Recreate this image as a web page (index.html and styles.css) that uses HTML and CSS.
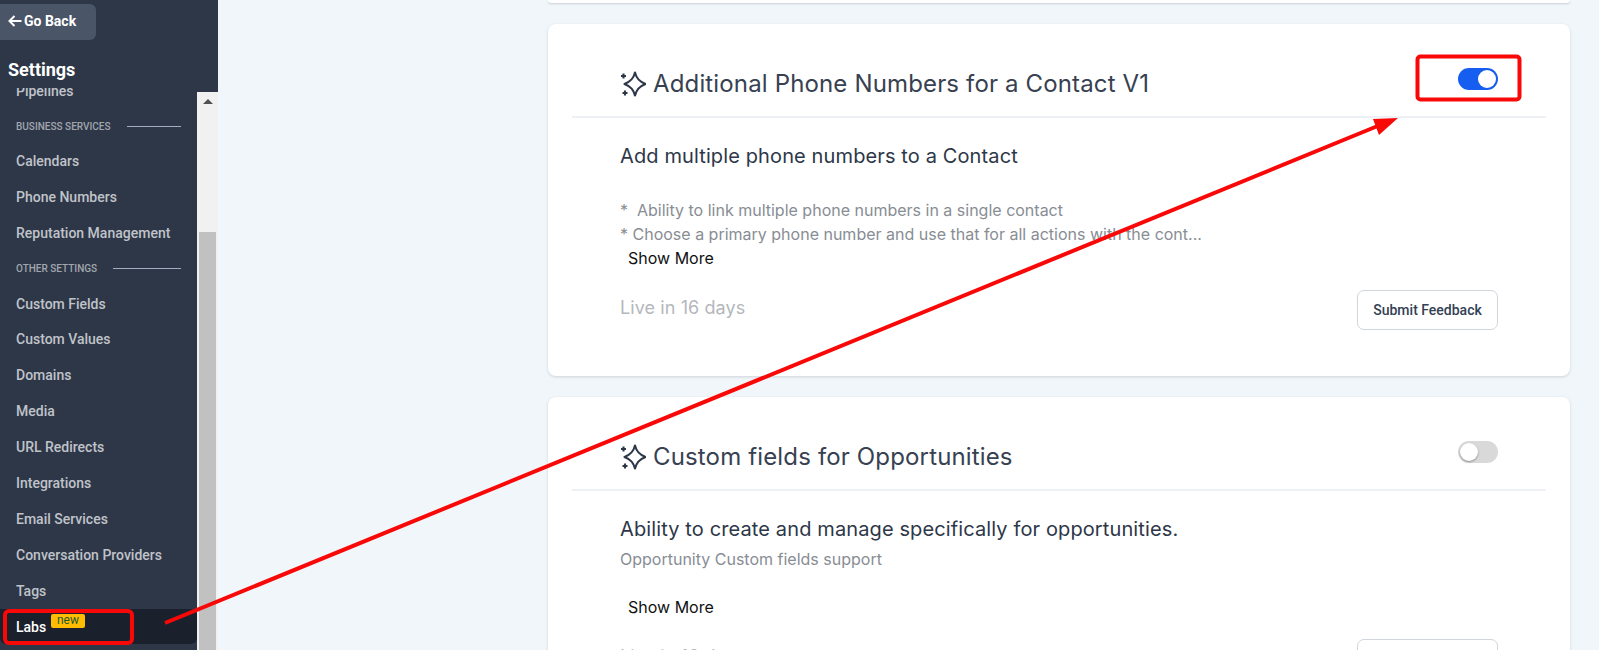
FILE: index.html
```html
<!DOCTYPE html>
<html lang="en">
<head>
<meta charset="utf-8">
<title>Labs</title>
<link rel="stylesheet" href="styles.css">
</head>
<body>
<div class="app">
  <aside class="sidebar">
    <div class="side-head">
      <a class="back"><span class="back-arrow">
        <svg width="14" height="12" viewBox="0 0 14 12"><path d="M13.5 6H2M6.5 1 1.5 6l5 5" fill="none" stroke="#fff" stroke-width="2"/></svg>
      </span>Go Back</a>
      <h1 class="side-title">Settings</h1>
    </div>
    <div class="side-body">
      <nav class="nav">
        <a class="nav-item">Pipelines</a>
        <div class="nav-section"><span>BUSINESS SERVICES</span><i></i></div>
        <a class="nav-item">Calendars</a>
        <a class="nav-item">Phone Numbers</a>
        <a class="nav-item">Reputation Management</a>
        <div class="nav-section"><span>OTHER SETTINGS</span><i></i></div>
        <a class="nav-item">Custom Fields</a>
        <a class="nav-item">Custom Values</a>
        <a class="nav-item">Domains</a>
        <a class="nav-item">Media</a>
        <a class="nav-item">URL Redirects</a>
        <a class="nav-item">Integrations</a>
        <a class="nav-item">Email Services</a>
        <a class="nav-item">Conversation Providers</a>
        <a class="nav-item">Tags</a>
        <a class="nav-item active">Labs<span class="badge">new</span></a>
      </nav>
      <div class="scrollbar">
        <div class="scroll-up"></div>
        <div class="scroll-thumb"></div>
      </div>
    </div>
  </aside>
  <main class="main">
    <div class="stub"></div>
    <section class="card">
      <header class="card-head">
        <h2 class="card-title">
          <svg class="spark" width="26" height="26" viewBox="0 0 26 26"><path d="M15 1.500C16.500 7.500 19 10.500 25.500 13 19 15.500 16.500 18.500 15 24.500 13.500 18.500 11 15.500 4.500 13 11 10.500 13.500 7.500 15 1.500Z" fill="none" stroke="#2d3748" stroke-width="2.100" stroke-linejoin="round"/><path d="M3.500 2.500v5M1 5h5M5 19.500v5M2.500 22h5" fill="none" stroke="#2d3748" stroke-width="2.100"/></svg>
          Additional Phone Numbers for a Contact V1
        </h2>
        <span class="toggle on"><b></b></span>
      </header>
      <div class="card-body">
        <h3 class="lead">Add multiple phone numbers to a Contact</h3>
        <div class="desc tall">
          <p>*&nbsp; Ability to link multiple phone numbers in a single contact</p>
          <p>* Choose a primary phone number and use that for all actions with the cont...</p>
        </div>
        <a class="more">Show More</a>
        <div class="foot">
          <span class="live">Live in 16 days</span>
          <button class="btn">Submit Feedback</button>
        </div>
      </div>
    </section>
    <section class="card">
      <header class="card-head">
        <h2 class="card-title">
          <svg class="spark" width="26" height="26" viewBox="0 0 26 26"><path d="M15 1.500C16.500 7.500 19 10.500 25.500 13 19 15.500 16.500 18.500 15 24.500 13.500 18.500 11 15.500 4.500 13 11 10.500 13.500 7.500 15 1.500Z" fill="none" stroke="#2d3748" stroke-width="2.100" stroke-linejoin="round"/><path d="M3.500 2.500v5M1 5h5M5 19.500v5M2.500 22h5" fill="none" stroke="#2d3748" stroke-width="2.100"/></svg>
          Custom fields for Opportunities
        </h2>
        <span class="toggle"><b></b></span>
      </header>
      <div class="card-body">
        <h3 class="lead">Ability to create and manage specifically for opportunities.</h3>
        <div class="desc">
          <p>Opportunity Custom fields support</p>
        </div>
        <a class="more spaced">Show More</a>
        <div class="foot">
          <span class="live">Live in 16 days</span>
          <button class="btn">Submit Feedback</button>
        </div>
      </div>
    </section>
  </main>
</div>
<svg class="annot" width="1599" height="650" viewBox="0 0 1599 650">
  <rect x="1417.500" y="56.500" width="102" height="43" rx="3" fill="none" stroke="#f90808" stroke-width="4"/>
  <rect x="5" y="611" width="127" height="32" rx="4" fill="none" stroke="#f90808" stroke-width="4"/>
  <path d="M165 623 1385 123" fill="none" stroke="#f90808" stroke-width="4"/>
  <path d="M1398 118 1373 119 1379 135Z" fill="#f90808"/>
</svg>
</body>
</html>
```
FILE: styles.css
```css
* { box-sizing: border-box; }
html, body { margin: 0; height: 650px; overflow: hidden; }
body { background: #f1f6fa; font-family: Inter, "Liberation Sans", sans-serif; position: relative; }
h1, h2, h3, p { margin: 0; font-weight: 400; }

.app { display: flex; height: 650px; }

.sidebar {
  width: 218px;
  flex: none;
  background: #2d3748;
  display: flex;
  flex-direction: column;
  font-family: Roboto, "Liberation Sans", sans-serif;
}
.side-head { height: 88px; flex: none; padding-top: 4px; }
.back {
  display: flex;
  align-items: center;
  width: 96px;
  height: 36px;
  padding-left: 8px;
  padding-bottom: 2px;
  background: #4a5568;
  border-radius: 0 6px 6px 0;
  color: #fff;
  font-size: 14px;
  font-weight: 700;
}
.back-arrow { display: flex; margin-right: 2px; }
.side-title { margin: 18px 0 0 8px; color: #fff; font-size: 18px; font-weight: 700; line-height: 24px; }

.side-body { flex: 1; min-height: 0; display: flex; overflow: hidden; }
.nav { width: 197px; flex: none; margin-top: -15px; }
.nav-item {
  display: flex;
  align-items: center;
  height: 35.9px;
  padding-left: 16px;
  color: #c0c3c9;
  font-size: 14px;
  font-weight: 500;
}
.nav-section {
  display: flex;
  align-items: center;
  height: 34.500px;
  padding: 1px 16px 0;
  color: #a2a6ae;
  font-size: 10px;
  font-weight: 500;
}
.nav-section i { flex: 1; height: 1px; margin-left: 16px; background: #a0aec0; }
.nav-item.active {
  position: relative;
  color: #fff;
  background: #1a202c;
  border-radius: 0 6px 6px 6px;
}
.badge {
  position: absolute;
  left: 51px;
  top: 5px;
  width: 34px;
  height: 14px;
  background: #ffbc00;
  border-radius: 2px;
  color: #1f5a2a;
  font-size: 12px;
  font-weight: 400;
  line-height: 12px;
  text-align: center;
}

.scrollbar { width: 21px; flex: none; margin-top: 4px; background: #f1f1f1; padding: 0 2px; }
.scroll-up {
  width: 0;
  height: 0;
  margin: 7px auto 0;
  border: 5px solid transparent;
  border-top: 0;
  border-bottom-color: #505050;
}
.scroll-thumb { height: 420px; margin-top: 128px; background: #c1c1c1; }

.main { flex: 1; min-width: 0; padding: 0 29px 0 330px; color: #2d3748; }
.stub {
  height: 3px;
  background: #fff;
  border-radius: 0 0 8px 8px;
  box-shadow: 0 1px 2px rgba(45, 55, 72, .2);
}
.card {
  margin-top: 21px;
  height: 352px;
  background: #fff;
  border-radius: 8px;
  box-shadow: 0 1px 3px rgba(45, 55, 72, .18);
}
.card-head {
  height: 93.500px;
  margin: 0 24px;
  padding: 44px 48px 0;
  display: flex;
  justify-content: space-between;
  border-bottom: 2px solid #edf0f4;
}
.card-title {
  display: flex;
  align-items: center;
  gap: 7px;
  height: 32px;
  color: #374151;
  font-size: 24px;
  letter-spacing: .15px;
  line-height: 32px;
}
.toggle {
  width: 40px;
  height: 22px;
  border-radius: 11px;
  background: #d9d9d9;
  padding: 2px;
}
.toggle b {
  display: block;
  width: 18px;
  height: 18px;
  border-radius: 50%;
  background: #fff;
  box-shadow: 0 1px 2px rgba(0, 0, 0, .35);
}
.toggle.on { background: #155eef; }
.toggle.on b { margin-left: 18px; box-shadow: none; }

.card-body { padding: 24.500px 72px 0; }
.lead { font-size: 20px; letter-spacing: .12px; line-height: 28px; color: #2d3748; }
.desc { margin-top: 4px; color: #888d94; font-size: 16px; line-height: 24px; }
.desc.tall { margin-top: 28px; }
.more { display: block; margin-left: 8px; color: #111; font-size: 16px; line-height: 24px; }
.more.spaced { margin-top: 24px; }
.foot { display: flex; justify-content: space-between; align-items: flex-start; margin-top: 18px; }
.live { color: #b4b7bc; font-size: 18px; letter-spacing: .09px; line-height: 26px; margin-top: 7px; }
.btn {
  width: 141px;
  height: 40px;
  margin-top: 2px;
  background: #fff;
  border: 1px solid #d0d5dd;
  border-radius: 7px;
  color: #344054;
  font-family: Roboto, "Liberation Sans", sans-serif;
  font-size: 14px;
  font-weight: 500;
}

.annot { position: absolute; left: 0; top: 0; pointer-events: none; }
```
